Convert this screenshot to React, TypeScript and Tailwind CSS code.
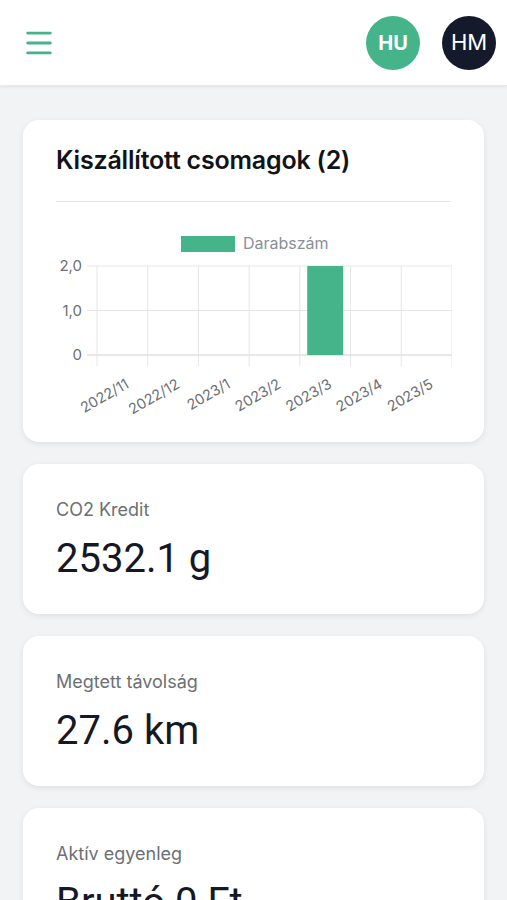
import { Menu } from "lucide-react";

const months = ["2022/11", "2022/12", "2023/1", "2023/2", "2023/3", "2023/4", "2023/5"];
const counts = [0, 0, 0, 0, 2, 0, 0];

function DeliveryChart() {
  // plot area inside svg coords (svg origin = page x 56, y 220)
  const left = 41;
  const right = 396;
  const top = 46;
  const bottom = 135;
  const colW = (right - left) / months.length;
  const yFor = (v: number) => bottom - (v / 2) * (bottom - top);

  return (
    <svg width="396" height="200" viewBox="0 0 396 200" className="block">
      {/* legend */}
      <rect x="125" y="16" width="54" height="16" fill="#45b48b" />
      <text x="187" y="29" fontSize="16" fill="#8a8f98" fontFamily="Inter, sans-serif">
        Darabszám
      </text>

      {/* horizontal grid + y labels */}
      {[2, 1, 0].map((v) => (
        <g key={v}>
          <line x1={left - 10} x2={right} y1={yFor(v)} y2={yFor(v)} stroke={v === 0 ? "#cfcfcf" : "#e6e6e6"} strokeWidth="1" />
          <text x="26" y={yFor(v) + 5} textAnchor="end" fontSize="15" fill="#6b6f76" fontFamily="Inter, sans-serif">
            {v === 0 ? "0" : `${v},0`}
          </text>
        </g>
      ))}

      {/* vertical grid */}
      {Array.from({ length: months.length + 1 }).map((_, i) => (
        <line key={i} x1={left + i * colW} x2={left + i * colW} y1={top} y2={bottom + 11} stroke="#e6e6e6" strokeWidth="1" />
      ))}

      {/* bars */}
      {counts.map((c, i) =>
        c > 0 ? (
          <rect key={i} x={left + i * colW + colW / 2 - 18} y={yFor(c)} width="36" height={bottom - yFor(c)} fill="#45b48b" />
        ) : null
      )}

      {/* x labels */}
      {months.map((m, i) => {
        const cx = left + i * colW + colW / 2 + 7.5;
        return (
          <text
            key={m}
            x={cx}
            y={167}
            textAnchor="end"
            fontSize="14.5"
            fill="#6b6f76"
            fontFamily="Inter, sans-serif"
            transform={`rotate(-30 ${cx} 167)`}
          >
            {m}
          </text>
        );
      })}
    </svg>
  );
}

function StatCard({ label, value }: { label: string; value: string }) {
  return (
    <div className="bg-white rounded-2xl shadow-[0_2px_6px_rgba(0,0,0,0.08)] px-[33px] pt-[34px] h-[150px] shrink-0">
      <p className="text-[18px] text-[#6b7075] leading-6" style={{ fontFamily: "Inter, sans-serif" }}>
        {label}
      </p>
      <p className="text-[40px] text-[#151826] leading-[48px] mt-[13px]" style={{ fontFamily: "Roboto, sans-serif" }}>
        {value}
      </p>
    </div>
  );
}

export default function App() {
  return (
    <div className="h-[900px] overflow-hidden bg-[#f2f3f4] flex flex-col" style={{ fontFamily: "Inter, sans-serif" }}>
      {/* top bar */}
      <header className="h-[86px] shrink-0 bg-white flex items-center px-[22px] shadow-[0_1px_3px_rgba(0,0,0,0.08)] border-b border-[#e8e9ea]">
        <Menu size={34} strokeWidth={2} className="text-[#45b48b]" />
        <div className="flex-1" />
        <div className="w-[54px] h-[54px] rounded-full bg-[#45b48b] text-white flex items-center justify-center text-[20px] font-bold">
          HU
        </div>
        <div className="w-[54px] h-[54px] rounded-full bg-[#141a2b] text-white flex items-center justify-center text-[22px] ml-[22px] -mr-[11px]">
          HM
        </div>
      </header>

      <main className="flex flex-col gap-[22px] px-[23px] pt-[34px]">
        <div className="bg-white rounded-2xl shadow-[0_2px_6px_rgba(0,0,0,0.08)] px-[33px] pt-[24px] h-[322px] shrink-0">
          <h2 className="text-[25px] font-semibold text-[#111318] leading-8 tracking-[-0.2px]">Kiszállított csomagok (2)</h2>
          <div className="h-px bg-[#e5e7eb] mt-[25px] mr-0" />
          <div className="mt-[18px]">
            <DeliveryChart />
          </div>
        </div>

        <StatCard label="CO2 Kredit" value="2532.1 g" />
        <StatCard label="Megtett távolság" value="27.6 km" />
        <StatCard label="Aktív egyenleg" value="Bruttó 0 Ft" />
      </main>
    </div>
  );
}
